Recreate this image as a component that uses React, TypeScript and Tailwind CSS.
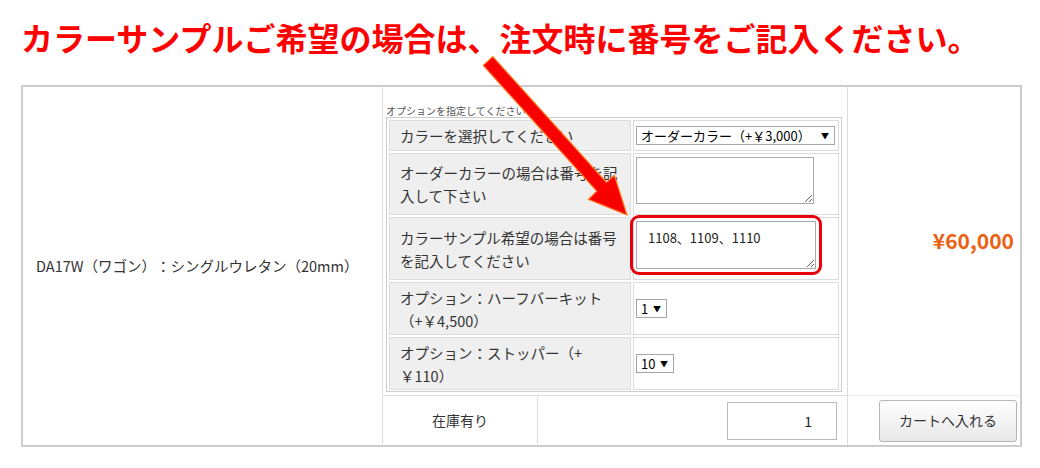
import React from 'react'

const labelCell =
  'bg-[#efefef] border border-[#dcdcdc] px-[10px] flex items-center text-[14.5px] leading-[23px] text-[#333]'
const valueCell = 'bg-white border border-[#dcdcdc] pl-[2px] flex items-center'

function FakeSelect({ text, width }: { text: string; width: string }) {
  return (
    <div
      className={`${width} h-[19px] border border-[#a6a6a6] bg-white flex items-center justify-between pl-[4px] pr-[5px] text-[13px] leading-[17px] text-black`}
    >
      <span>{text}</span>
      <span className="text-[8px] leading-none">▼</span>
    </div>
  )
}

function Arrow() {
  // tail (488,61) -> tip (627,215)
  return (
    <svg
      className="absolute left-0 top-0 pointer-events-none"
      width={1040}
      height={468}
      viewBox="0 0 1040 468"
    >
      <polygon
        points="483.2,65.4 492.8,56.6 606.4,182.4 614.4,175.2 627,215 588.4,199.4 596.8,191.2"
        fill="#f80000"
        stroke="#ff7a1a"
        strokeWidth={1.2}
        strokeLinejoin="miter"
      />
    </svg>
  )
}

export default function App() {
  return (
    <div className="relative w-[1040px] h-[468px] bg-white font-['Noto_Sans_CJK_JP','Liberation_Sans',sans-serif] text-[#333] [text-spacing-trim:space-all]">
      <h1 className="pt-[21px] pl-[21px] text-[32px] leading-[32px] font-bold text-[#ff0000] whitespace-nowrap">
        カラーサンプルご希望の場合は、注文時に番号をご記入ください。
      </h1>

      <div className="mt-[32px] ml-[21px] w-[1001px] border-2 border-[#cccccc] grid grid-cols-[360px_155px_310px_172px] grid-rows-[309px_49px]">
        {/* 商品名 */}
        <div className="row-span-2 border-r border-[#dddddd] flex items-center pl-[13px] text-[14.5px]">
          DA17W（ワゴン）：シングルウレタン（20mm）
        </div>

        {/* オプション */}
        <div className="col-span-2 border-r border-b border-[#dddddd] pt-[17px] pl-[3px]">
          <div className="h-[13px] text-[10px] leading-[13px] text-[#555]">
            オプションを指定してください
          </div>
          <div className="w-[456px] h-[275px] border border-[#cccccc] p-[2px] grid grid-cols-[242px_206px] grid-rows-[31px_62px_63px_53px_53px] gap-[2px]">
            <div className={labelCell}>カラーを選択してください</div>
            <div className={valueCell}>
              <FakeSelect text="オーダーカラー（+￥3,000）" width="w-[199px]" />
            </div>

            <div className={labelCell}>
              <span>
                オーダーカラーの場合は番号を記
                <br />
                入して下さい
              </span>
            </div>
            <div className={`${valueCell} !items-start pt-[3px]`}>
              <textarea
                readOnly
                className="w-[178px] h-[47px] border border-[#a9a9a9] bg-white text-[13px] outline-none"
              />
            </div>

            <div className={labelCell}>
              <span>
                カラーサンプル希望の場合は番号
                <br />
                を記入してください
              </span>
            </div>
            <div className={`${valueCell} !items-start pt-[3px]`}>
              <div className="relative">
                <textarea
                  readOnly
                  defaultValue="1108、1109、1110"
                  className="block w-[180px] h-[48px] border border-[#a9a9a9] bg-white pl-[11px] pt-[8px] text-[13px] leading-[16px] text-[#222] outline-none"
                />
                <span className="absolute -inset-[6px] rounded-[9px] border-[3px] border-[#e8000d]" />
              </div>
            </div>

            <div className={labelCell}>
              <span>
                オプション：ハーフバーキット
                <br />
                （+￥4,500）
              </span>
            </div>
            <div className={valueCell}>
              <FakeSelect text="1" width="w-[31px]" />
            </div>

            <div className={labelCell}>
              <span>
                オプション：ストッパー（+
                <br />
                ￥110）
              </span>
            </div>
            <div className={valueCell}>
              <FakeSelect text="10" width="w-[38px]" />
            </div>
          </div>
        </div>

        {/* 価格 */}
        <div className="border-b border-[#eeeeee] flex items-center justify-end pr-[6px] text-[21px] font-bold text-[#ec6012]">
          ¥60,000
        </div>

        {/* 在庫・数量・カート */}
        <div className="border-r border-[#dddddd] flex items-center justify-center text-[14px]">
          在庫有り
        </div>
        <div className="border-r border-[#dddddd] flex items-center justify-end pr-[10px]">
          <input
            readOnly
            value="1"
            className="w-[110px] h-[38px] border border-[#b9b9b9] bg-white pr-[24px] text-right text-[14px] text-[#222] outline-none"
          />
        </div>
        <div className="flex items-center justify-end pr-[3px]">
          <button className="w-[138px] h-[42px] rounded-[3px] border border-[#b5b5b5] bg-linear-to-b from-white to-[#e8e8e8] text-[14px] text-[#333]">
            カートへ入れる
          </button>
        </div>
      </div>

      <Arrow />
    </div>
  )
}
